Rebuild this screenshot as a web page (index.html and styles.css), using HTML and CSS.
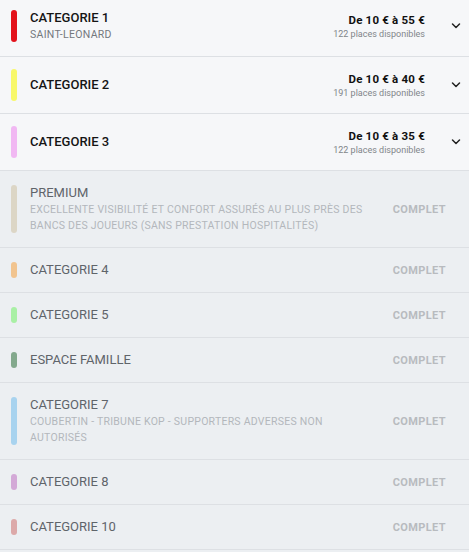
FILE: index.html
```html
<!DOCTYPE html>
<html lang="fr">
<head>
<meta charset="utf-8">
<title>Catégories</title>
<link rel="stylesheet" href="styles.css">
</head>
<body>
<ul class="list">
  <li class="row row-open row-first">
    <span class="bar bar-red"></span>
    <div class="info">
      <div class="title">CATEGORIE 1</div>
      <div class="sub">SAINT-LEONARD</div>
    </div>
    <div class="price">
      <div class="amount">De 10 € à 55 €</div>
      <div class="places">122 places disponibles</div>
    </div>
    <svg class="chev" width="16" height="8" viewBox="0 0 16 8"><path d="M4.5 2 L8 5.5 L11.5 2" fill="none" stroke="#222" stroke-width="1.5" stroke-linecap="round" stroke-linejoin="round"/></svg>
  </li>
  <li class="row row-open">
    <span class="bar bar-yellow"></span>
    <div class="info">
      <div class="title">CATEGORIE 2</div>
    </div>
    <div class="price">
      <div class="amount">De 10 € à 40 €</div>
      <div class="places">191 places disponibles</div>
    </div>
    <svg class="chev" width="16" height="8" viewBox="0 0 16 8"><path d="M4.5 2 L8 5.5 L11.5 2" fill="none" stroke="#222" stroke-width="1.5" stroke-linecap="round" stroke-linejoin="round"/></svg>
  </li>
  <li class="row row-open">
    <span class="bar bar-pink"></span>
    <div class="info">
      <div class="title">CATEGORIE 3</div>
    </div>
    <div class="price">
      <div class="amount">De 10 € à 35 €</div>
      <div class="places">122 places disponibles</div>
    </div>
    <svg class="chev" width="16" height="8" viewBox="0 0 16 8"><path d="M4.5 2 L8 5.5 L11.5 2" fill="none" stroke="#222" stroke-width="1.5" stroke-linecap="round" stroke-linejoin="round"/></svg>
  </li>
  <li class="row row-full">
    <span class="bar bar-beige"></span>
    <div class="info">
      <div class="title">PREMIUM</div>
      <div class="desc">EXCELLENTE VISIBILITÉ ET CONFORT ASSURÉS AU PLUS PRÈS DES BANCS DES JOUEURS (SANS PRESTATION HOSPITALITÉS)</div>
    </div>
    <div class="status">COMPLET</div>
  </li>
  <li class="row row-full">
    <span class="bar bar-orange"></span>
    <div class="info"><div class="title">CATEGORIE 4</div></div>
    <div class="status">COMPLET</div>
  </li>
  <li class="row row-full">
    <span class="bar bar-green"></span>
    <div class="info"><div class="title">CATEGORIE 5</div></div>
    <div class="status">COMPLET</div>
  </li>
  <li class="row row-full">
    <span class="bar bar-sage"></span>
    <div class="info"><div class="title">ESPACE FAMILLE</div></div>
    <div class="status">COMPLET</div>
  </li>
  <li class="row row-full">
    <span class="bar bar-blue"></span>
    <div class="info">
      <div class="title">CATEGORIE 7</div>
      <div class="desc">COUBERTIN - TRIBUNE KOP - SUPPORTERS ADVERSES NON AUTORISÉS</div>
    </div>
    <div class="status">COMPLET</div>
  </li>
  <li class="row row-full">
    <span class="bar bar-mauve"></span>
    <div class="info"><div class="title">CATEGORIE 8</div></div>
    <div class="status">COMPLET</div>
  </li>
  <li class="row row-full">
    <span class="bar bar-rose"></span>
    <div class="info"><div class="title">CATEGORIE 10</div></div>
    <div class="status">COMPLET</div>
  </li>
</ul>
</body>
</html>
```

FILE: styles.css
```css
* { box-sizing: border-box; }
html, body { margin: 0; padding: 0; }
body {
  background: #eceff2;
  font-family: Roboto, "Liberation Sans", sans-serif;
  width: 469px;
}
.list {
  list-style: none;
  margin: 0;
  padding: 0;
}
.row {
  display: flex;
  align-items: stretch;
  border-bottom: 1px solid #dde0e4;
  padding-left: 11px;
}
.row-open {
  background: #f6f7f9;
  padding-top: 12px;
  padding-bottom: 12px;
  padding-right: 5px;
  min-height: 57px;
}
.row-first {
  padding-top: 10px;
  padding-bottom: 14px;
}
.row-full {
  background: #eceff2;
  padding-top: 14px;
  padding-bottom: 14px;
  padding-right: 23px;
}
.bar {
  flex: 0 0 6px;
  width: 6px;
  border-radius: 3px;
  margin-right: 13px;
}
.bar-red { background: #e3121b; }
.bar-yellow { background: #f8f86a; }
.bar-pink { background: #f1b8f3; }
.bar-beige { background: #dcd6c6; }
.bar-orange { background: #f1c48f; }
.bar-green { background: #a9f0a5; }
.bar-sage { background: #83a98d; }
.bar-blue { background: #a8d3ef; }
.bar-mauve { background: #d3a9d7; }
.bar-rose { background: #dca9a9; }

.info {
  flex: 1 1 auto;
  display: flex;
  flex-direction: column;
  justify-content: center;
  min-width: 0;
}
.title {
  font-size: 13px;
  line-height: 16px;
  font-weight: 500;
  color: #151515;
}
.row-full .title {
  font-weight: 400;
  color: #5f646a;
}
.sub {
  font-size: 10.5px;
  line-height: 15px;
  letter-spacing: 0.3px;
  color: #74787d;
  margin-top: 1px;
}
.desc {
  font-size: 10.5px;
  line-height: 15.5px;
  letter-spacing: 0.25px;
  color: #b3b7bc;
  margin-top: 1px;
  max-width: 340px;
}
.price {
  display: flex;
  flex-direction: column;
  justify-content: center;
  align-items: flex-end;
  text-align: right;
}
.amount {
  font-size: 11.5px;
  line-height: 16px;
  font-weight: 700;
  color: #111;
  letter-spacing: 0.2px;
}
.places {
  font-size: 9px;
  line-height: 13px;
  color: #818589;
}
.chev {
  align-self: center;
  margin-left: 23px;
  flex: 0 0 16px;
}
.status {
  align-self: center;
  font-size: 11px;
  font-weight: 700;
  color: #b8bbbf;
  letter-spacing: 0.4px;
}
```
